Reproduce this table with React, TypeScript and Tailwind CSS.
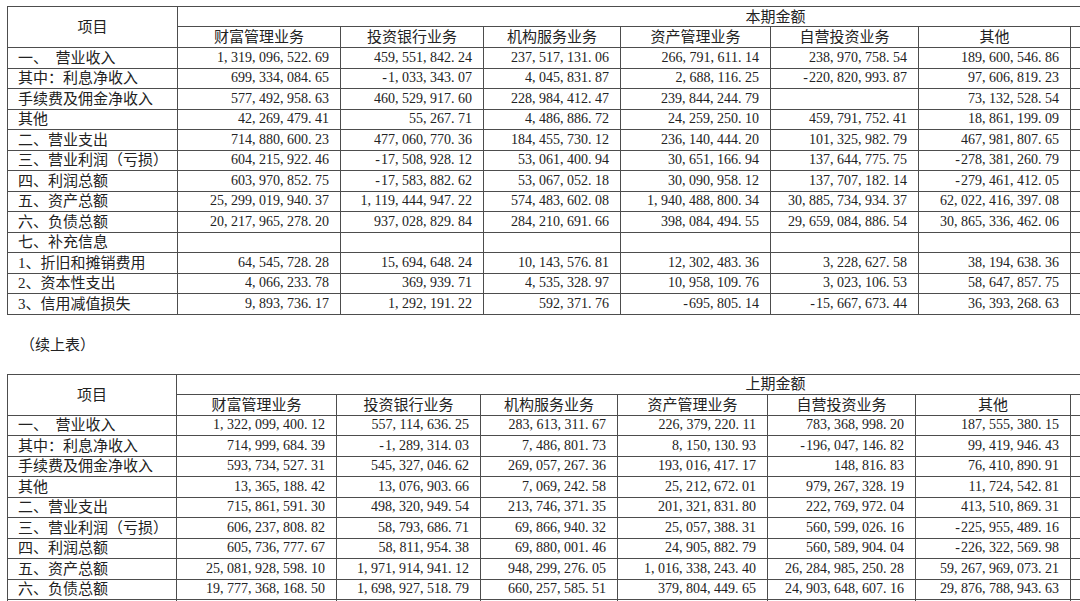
import React from 'react'

// column widths (px) — the table runs past the right edge of the page
const colsA = [170, 163, 143, 137, 150, 148, 152, 151, 152]
const colsB = [169, 160, 144, 137, 150, 148, 155, 152, 152]

const heads = ['财富管理业务', '投资银行业务', '机构服务业务', '资产管理业务', '自营投资业务', '其他', '', '']

const current: string[][] = [
  ['一、\u00a0\u00a0营业收入', '1,319,096,522.69', '459,551,842.24', '237,517,131.06', '266,791,611.14', '238,970,758.54', '189,600,546.86'],
  ['其中：利息净收入', '699,334,084.65', '-1,033,343.07', '4,045,831.87', '2,688,116.25', '-220,820,993.87', '97,606,819.23'],
  ['手续费及佣金净收入', '577,492,958.63', '460,529,917.60', '228,984,412.47', '239,844,244.79', '', '73,132,528.54'],
  ['其他', '42,269,479.41', '55,267.71', '4,486,886.72', '24,259,250.10', '459,791,752.41', '18,861,199.09'],
  ['二、营业支出', '714,880,600.23', '477,060,770.36', '184,455,730.12', '236,140,444.20', '101,325,982.79', '467,981,807.65'],
  ['三、营业利润（亏损）', '604,215,922.46', '-17,508,928.12', '53,061,400.94', '30,651,166.94', '137,644,775.75', '-278,381,260.79'],
  ['四、利润总额', '603,970,852.75', '-17,583,882.62', '53,067,052.18', '30,090,958.12', '137,707,182.14', '-279,461,412.05'],
  ['五、资产总额', '25,299,019,940.37', '1,119,444,947.22', '574,483,602.08', '1,940,488,800.34', '30,885,734,934.37', '62,022,416,397.08'],
  ['六、负债总额', '20,217,965,278.20', '937,028,829.84', '284,210,691.66', '398,084,494.55', '29,659,084,886.54', '30,865,336,462.06'],
  ['七、补充信息', '', '', '', '', '', ''],
  ['1、折旧和摊销费用', '64,545,728.28', '15,694,648.24', '10,143,576.81', '12,302,483.36', '3,228,627.58', '38,194,638.36'],
  ['2、资本性支出', '4,066,233.78', '369,939.71', '4,535,328.97', '10,958,109.76', '3,023,106.53', '58,647,857.75'],
  ['3、信用减值损失', '9,893,736.17', '1,292,191.22', '592,371.76', '-695,805.14', '-15,667,673.44', '36,393,268.63'],
]

const previous: string[][] = [
  ['一、\u00a0\u00a0营业收入', '1,322,099,400.12', '557,114,636.25', '283,613,311.67', '226,379,220.11', '783,368,998.20', '187,555,380.15'],
  ['其中：利息净收入', '714,999,684.39', '-1,289,314.03', '7,486,801.73', '8,150,130.93', '-196,047,146.82', '99,419,946.43'],
  ['手续费及佣金净收入', '593,734,527.31', '545,327,046.62', '269,057,267.36', '193,016,417.17', '148,816.83', '76,410,890.91'],
  ['其他', '13,365,188.42', '13,076,903.66', '7,069,242.58', '25,212,672.01', '979,267,328.19', '11,724,542.81'],
  ['二、营业支出', '715,861,591.30', '498,320,949.54', '213,746,371.35', '201,321,831.80', '222,769,972.04', '413,510,869.31'],
  ['三、营业利润（亏损）', '606,237,808.82', '58,793,686.71', '69,866,940.32', '25,057,388.31', '560,599,026.16', '-225,955,489.16'],
  ['四、利润总额', '605,736,777.67', '58,811,954.38', '69,880,001.46', '24,905,882.79', '560,589,904.04', '-226,322,569.98'],
  ['五、资产总额', '25,081,928,598.10', '1,971,914,941.12', '948,299,276.05', '1,016,338,243.40', '26,284,985,250.28', '59,267,969,073.21'],
  ['六、负债总额', '19,777,368,168.50', '1,698,927,518.79', '660,257,585.51', '379,804,449.65', '24,903,648,607.16', '29,876,788,943.63'],
  ['七、补充信息', '', '', '', '', '', ''],
]

// SimSun-style half-width cells: punctuation takes a full digit slot
function Num({ v }: { v: string }) {
  return (
    <>
      {v.split('').map((c, i) =>
        c === ',' || c === '.' ? (
          <span key={i} className="inline-block w-[7px] text-left">{c}</span>
        ) : c === '-' ? (
          <span key={i} className="inline-block w-[7px] text-center">{c}</span>
        ) : (
          c
        ),
      )}
    </>
  )
}

function Segment({ cols, period, rows }: { cols: number[]; period: string; rows: string[][] }) {
  const total = cols.reduce((a, b) => a + b, 0)
  const cell = 'border border-[#4d4d4d] p-0'
  return (
    <table
      className="table-fixed border-collapse text-[#222] font-['Liberation_Serif','Noto_Sans_CJK_SC',sans-serif]"
      style={{ width: total }}
    >
      <colgroup>
        {cols.map((w, i) => (
          <col key={i} style={{ width: w }} />
        ))}
      </colgroup>
      <thead>
        <tr className="h-[20px]">
          <th rowSpan={2} className={`${cell} text-[15px] font-normal leading-[18px] text-center`}>项目</th>
          <th colSpan={8} className={`${cell} text-[15px] font-normal leading-[18px] text-center`}>{period}</th>
        </tr>
        <tr className="h-[21px]">
          {heads.map((h, i) => (
            <th key={i} className={`${cell} text-[15px] font-normal leading-[18px] text-center`}>{h}</th>
          ))}
        </tr>
      </thead>
      <tbody>
        {rows.map((r, i) => (
          <tr key={i} className="h-[20.5px]">
            <td className={`${cell} pl-[10px] text-[15px] leading-[18px] whitespace-nowrap`}>{r[0]}</td>
            {r.slice(1).map((v, j) => (
              <td key={j} className={`${cell} pr-[11px] text-right text-[14px] leading-[18px] whitespace-nowrap`}>
                <Num v={v} />
              </td>
            ))}
            <td className={cell} />
            <td className={cell} />
          </tr>
        ))}
      </tbody>
    </table>
  )
}

export default function App() {
  return (
    <div className="w-screen h-screen overflow-hidden bg-white">
      <div className="pt-[6px] pl-[7px]">
        <Segment cols={colsA} period="本期金额" rows={current} />
        <p className="mt-[19px] mb-[20px] pl-[13px] h-[20px] text-[15px] leading-[20px] text-[#222] font-['Noto_Sans_CJK_SC',sans-serif]">
          （续上表）
        </p>
        <Segment cols={colsB} period="上期金额" rows={previous} />
      </div>
    </div>
  )
}
